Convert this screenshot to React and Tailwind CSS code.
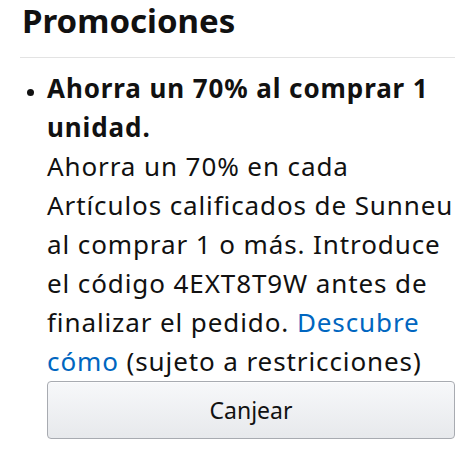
export default function App() {
  return (
    <div
      className="w-[475px] h-[455px] bg-white px-[20px] text-[#111111]"
      style={{ fontFamily: '"Noto Sans", "Open Sans", sans-serif' }}
    >
      <h2 className="pt-[1px] pl-[2px] text-[33px] leading-[40px] font-bold">
        Promociones
      </h2>
      <hr className="mt-[16px] border-0 h-px bg-[#e3e3e3]" />

      <ul className="mt-[11px]">
        <li className="flex">
          <div className="w-[27px] shrink-0">
            <div className="ml-[7px] mt-[20px] w-[7px] h-[7px] rounded-full bg-[#111111]" />
          </div>
          <div className="flex-1 text-[26px] leading-[39px] tracking-[0.9px]">
            <p className="font-bold">
              Ahorra un 70% al comprar 1<br />
              unidad.
            </p>
            <p>
              Ahorra un 70% en cada
              <br />
              Artículos calificados de Sunneu
              <br />
              al comprar 1 o más. Introduce
              <br />
              el código 4EXT8T9W antes de
              <br />
              finalizar el pedido.{" "}
              <a href="#" className="text-[#0066c0]">
                Descubre
                <br />
                cómo
              </a>{" "}
              (sujeto a restricciones)
            </p>
            <button className="w-full h-[58px] rounded-[4px] border border-[#a8abb1] bg-gradient-to-b from-[#f7f8fa] to-[#e7e9ec] text-[23px] tracking-normal text-[#111111] shadow-[0_1px_0_rgba(255,255,255,0.6)_inset]">
              Canjear
            </button>
          </div>
        </li>
      </ul>
    </div>
  );
}
